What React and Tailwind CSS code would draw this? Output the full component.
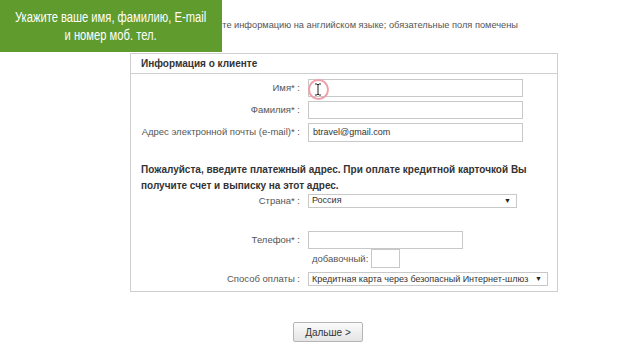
import React from "react";

// Форма "Информация о клиенте" с зелёной подсказкой поверх

function Row({ label, children, className = "" }) {
    return (
        <div className={`flex items-center ${className}`}>
            <div className="w-[177px] pr-[8px] text-right text-[9.5px] whitespace-nowrap text-[#555]">{label}</div>
            {children}
        </div>
    );
}

function Select({ value, className = "" }) {
    return (
        <div
            className={`flex items-center justify-between h-[14px] border border-[#c8c8c8] bg-white pl-[3px] pr-[5px] text-[9px] text-[#333] ${className}`}
        >
            <span>{value}</span>
            <span className="text-[7px] text-[#222]">▼</span>
        </div>
    );
}

export default function App() {
    return (
        <div
            className="relative w-[640px] h-[360px] bg-white overflow-hidden"
            style={{ fontFamily: '"Liberation Sans", Arial, sans-serif' }}
        >
            {/* текст уходит под подсказку слева */}
            <div className="ml-[222px] w-[296px] pt-[19px] flex justify-end overflow-hidden text-[9.25px] whitespace-nowrap text-[#555] leading-[12px]">
                <span className="shrink-0">Пожалуйста, вводите информацию на английском языке; обязательные поля помечены</span>
            </div>

            <div className="ml-[130px] mt-[22px] w-[428px] h-[239px] border border-[#cfcfcf]">
                <div className="h-[20px] border-b border-[#cfcfcf] pl-[10px] flex items-center text-[10px] font-bold text-[#333]">
                    Информация о клиенте
                </div>

                <div className="pt-[5px] flex flex-col gap-[4px]">
                    <Row label="Имя* :">
                        <div className="w-[215px] h-[18px] border border-[#c8c8c8]" />
                    </Row>
                    <Row label="Фамилия* :">
                        <div className="w-[215px] h-[18px] border border-[#c8c8c8]" />
                    </Row>
                    <Row label="Адрес электронной почты (e-mail)* :">
                        <div className="w-[215px] h-[19px] border border-[#c8c8c8] pl-[4px] flex items-center text-[9px] text-[#333]">
                            btravel@gmail.com
                        </div>
                    </Row>
                </div>

                <div className="mt-[20px] pl-[10px] pr-[20px] text-[10px] font-bold leading-[16px] text-[#333]">
                    Пожалуйста, введите платежный адрес. При оплате кредитной карточкой Вы получите счет и выписку на этот адрес.
                </div>

                <Row label="Страна* :" className="mt-[0px]">
                    <Select value="Россия" className="w-[209px]" />
                </Row>

                <Row label="Телефон* :" className="mt-[23px]">
                    <div className="w-[155px] h-[18px] border border-[#c8c8c8]" />
                </Row>
                <div className="flex items-center pl-[181px]">
                    <span className="text-[9.5px] text-[#555]">добавочный:</span>
                    <div className="ml-[3px] w-[29px] h-[19px] border border-[#c8c8c8]" />
                </div>
                <Row label="Способ оплаты :" className="mt-[4px]">
                    <Select value="Кредитная карта через безопасный Интернет-шлюз" className="w-[240px]" />
                </Row>
            </div>

            <div className="mt-[30px] ml-[293px] w-[70px] h-[20px] border border-[#b5b5b5] rounded-[2px] bg-gradient-to-b from-[#fbfbfb] to-[#e4e4e4] flex items-center justify-center text-[10px] text-[#333]">
                Дальше &gt;
            </div>

            {/* зелёная подсказка */}
            <div className="absolute left-0 top-0 w-[222px] h-[52px] bg-[#5f9b2d] flex flex-col items-center justify-center text-white text-[14px] leading-[18px] whitespace-nowrap">
                <span className="inline-block scale-x-[0.8]">Укажите ваше имя, фамилию, E-mail</span>
                <span className="inline-block scale-x-[0.8]">и номер моб. тел.</span>
            </div>

            {/* курсор */}
            <div className="absolute left-[308px] top-[79px] w-[21px] h-[21px] rounded-full border-[2px] border-[#f0a0a8]" />
            <svg className="absolute left-[314px] top-[83px]" width="8" height="13" viewBox="0 0 8 13">
                <path d="M1 1h2l1 1 1-1h2M4 2v9M1 12h2l1-1 1 1h2" fill="none" stroke="#222" strokeWidth="1" />
            </svg>
        </div>
    );
}
